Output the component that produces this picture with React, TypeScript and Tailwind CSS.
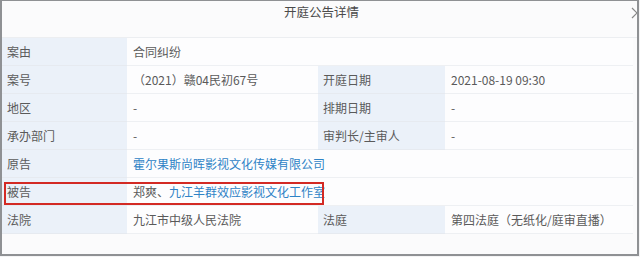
import React from "react";

const font = { fontFamily: '"Noto Sans CJK SC", "Noto Sans", sans-serif' };

function Label({ children }: { children: React.ReactNode }) {
  return (
    <div className="bg-[#ebf1f9] border-b border-[#e6eaf0] pl-[5px] flex items-center text-[12px] text-[#5a5a5a] h-[28px]">
      {children}
    </div>
  );
}

function Value({ children, span }: { children: React.ReactNode; span?: boolean }) {
  return (
    <div
      className={
        "bg-[#fdfdfe] border-b border-[#eef0f3] pl-[6px] flex items-center text-[12px] text-[#5a5a5a] h-[28px] " +
        (span ? "col-span-3" : "")
      }
    >
      {children}
    </div>
  );
}

export default function App() {
  return (
    <div className="w-[640px] h-[257px] bg-[#f4f4f5] overflow-hidden" style={font}>
      <div className="relative w-[639px] h-[256px] border-l-2 border-t border-r-2 border-b-2 border-[#8f9194] bg-[#fbfbfc] overflow-hidden">
        <div className="h-[37px] border-b border-[#eceef1] flex justify-center pt-[2px]">
          <span className="text-[12.5px] leading-[18px] text-[#4a4a4a] pl-[4px]">开庭公告详情</span>
        </div>
        <svg className="absolute right-[-6px] top-[6px]" width="12" height="12" viewBox="0 0 12 12">
          <path d="M1 1 L11 11 M11 1 L1 11" stroke="#888" strokeWidth="1.2" fill="none" />
        </svg>
        <div className="grid grid-cols-[125px_191px_127px_188px]">
          <Label>案由</Label>
          <Value span>合同纠纷</Value>
          <Label>案号</Label>
          <Value>（2021）赣04民初67号</Value>
          <Label>开庭日期</Label>
          <Value>2021-08-19 09:30</Value>
          <Label>地区</Label>
          <Value>-</Value>
          <Label>排期日期</Label>
          <Value>-</Value>
          <Label>承办部门</Label>
          <Value>-</Value>
          <Label>审判长/主审人</Label>
          <Value>-</Value>
          <Label>原告</Label>
          <Value span>
            <span className="text-[#2f83c6]">霍尔果斯尚晖影视文化传媒有限公司</span>
          </Value>
          <div className="col-span-4 relative grid grid-cols-[125px_506px]">
            <Label>被告</Label>
            <Value>
              郑爽、<span className="text-[#2f83c6]">九江羊群效应影视文化工作室</span>
            </Value>
            <div className="absolute left-[2px] top-[4px] w-[320px] h-[23px] border-2 border-[#d32a24]" />
          </div>
          <Label>法院</Label>
          <Value>九江市中级人民法院</Value>
          <Label>法庭</Label>
          <Value>第四法庭（无纸化/庭审直播）</Value>
        </div>
      </div>
    </div>
  );
}
